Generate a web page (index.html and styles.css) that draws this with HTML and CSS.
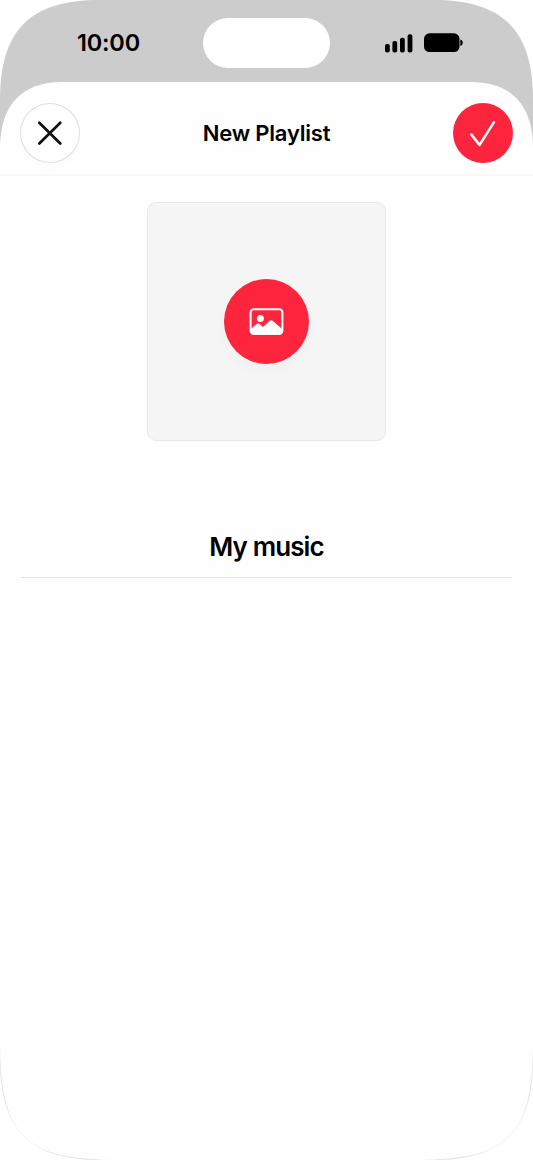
FILE: index.html
```
<!DOCTYPE html>
<html lang="en">
<head>
<meta charset="utf-8">
<title>New Playlist</title>
<link rel="stylesheet" href="styles.css">
</head>
<body>
<div class="phone">
  <header class="status">
    <span class="time">10:00</span>
    <span class="island"></span>
    <span class="indicators">
      <svg class="signal" width="28" height="20" viewBox="0 0 28 20"><rect x="0" y="11" width="4.8" height="8.6" rx="2"/><rect x="7.4" y="8" width="4.8" height="11.6" rx="2"/><rect x="15" y="4.7" width="4.8" height="14.9" rx="2"/><rect x="22.6" y="1.2" width="4.8" height="18.4" rx="2"/></svg>
      <svg class="battery" width="39" height="20" viewBox="0 0 39 20"><rect x="0" y="0.3" width="35.5" height="18.7" rx="5.5"/><path d="M36.3 6.4C39.6 7.2 39.6 12.3 36.3 13.1Z"/></svg>
    </span>
  </header>
  <main class="sheet">
    <div class="nav">
      <button class="round close" aria-label="Close"><svg width="60" height="60" viewBox="0 0 60 60"><path d="M19.3 19.7L40.3 40.5M40.3 19.7L19.3 40.5"/></svg></button>
      <h1 class="title">New Playlist</h1>
      <button class="round done" aria-label="Done"><svg width="60" height="60" viewBox="0 0 60 60"><path d="M18.4 31.6L26.6 41.9L41 19.2"/></svg></button>
    </div>
    <div class="artwork">
      <button class="picker" aria-label="Choose artwork"><svg width="85" height="85" viewBox="0 0 85 85"><rect class="frame" x="26.6" y="30.2" width="31.8" height="24.6" rx="3.2"/><circle class="fill" cx="36.4" cy="39.4" r="3.5"/><path class="fill" d="M26.6 50.3L32.8 44.9Q34.2 43.7 35.6 44.9L39 48L45.8 41.8Q47.2 40.6 48.6 41.8L58.4 50.3V52.8Q58.4 55.8 55.4 55.8H29.6Q26.6 55.8 26.6 52.8Z"/></svg></button>
    </div>
    <div class="name">My music</div>
  </main>
</div>
</body>
</html>
```
FILE: styles.css
```
* { box-sizing: border-box; }
body { margin: 0; background: #fff; font-family: Inter, "Liberation Sans", sans-serif; color: #000; }
.phone {
  width: 533px;
  height: 1160px;
  background: linear-gradient(#ccc 400px, #e2e2e2 900px);
  clip-path: path("M0 100C0 30 30 0 100 0H433C503 0 533 30 533 100V1060C533 1130 503 1160 433 1160H100C30 1160 0 1130 0 1060Z");
}
.status {
  height: 82px;
  padding: 18px 70px 0 77px;
  display: grid;
  grid-template-columns: 126px 127px 1fr;
  align-items: start;
}
.time { font-size: 23.5px; font-weight: 600; line-height: 50px; letter-spacing: -0.2px; }
.island { height: 50px; border-radius: 25px; background: #fff; }
.indicators { display: flex; justify-content: flex-end; gap: 11px; padding-top: 15px; }
.sheet {
  height: 1078px;
  background: #fefefe;
  clip-path: path("M0 66C0 23 22 0 62 0H471C511 0 533 23 533 66V958C533 1054.7 509.7 1078 413 1078H120C23.3 1078 0 1054.7 0 958Z");
}
.nav {
  height: 94px;
  padding: 21px 20px 0;
  display: flex;
  justify-content: space-between;
  border-bottom: 2px solid #f8f8f8;
}
.title { margin: 0; font-size: 22px; font-weight: 600; line-height: 60px; letter-spacing: -0.2px; }
button { padding: 0; border: 0; border-radius: 50%; }
button svg { display: block; }
.round { width: 60px; height: 60px; }
.round path { fill: none; stroke-linecap: round; stroke-linejoin: round; }
.close { background: #fff; box-shadow: inset 0 0 0 1px #dedede, 0 3px 9px rgba(0, 0, 0, 0.015); }
.close path { stroke: #111; stroke-width: 2.7; }
.done { background: #fc253d; }
.done path { stroke: #fff; stroke-width: 2.5; }
.artwork {
  width: 239px;
  height: 239px;
  margin: 26px auto 0 147px;
  padding-bottom: 1px;
  display: grid;
  place-items: center;
  background: #f5f5f5;
  border: 1px solid #e9e9e9;
  border-radius: 9px;
}
.picker { width: 85px; height: 85px; background: #fc253d; box-shadow: 0 7px 14px rgba(0, 0, 0, 0.025); }
.frame { fill: none; stroke: #fff; stroke-width: 2; }
.fill { fill: #fff; }
.name {
  height: 61px;
  margin: 76px 21px 0;
  border-bottom: 1px solid #e2e2e2;
  font-size: 26px;
  font-weight: 600;
  line-height: 60px;
  letter-spacing: -0.9px;
  text-align: center;
}
```
